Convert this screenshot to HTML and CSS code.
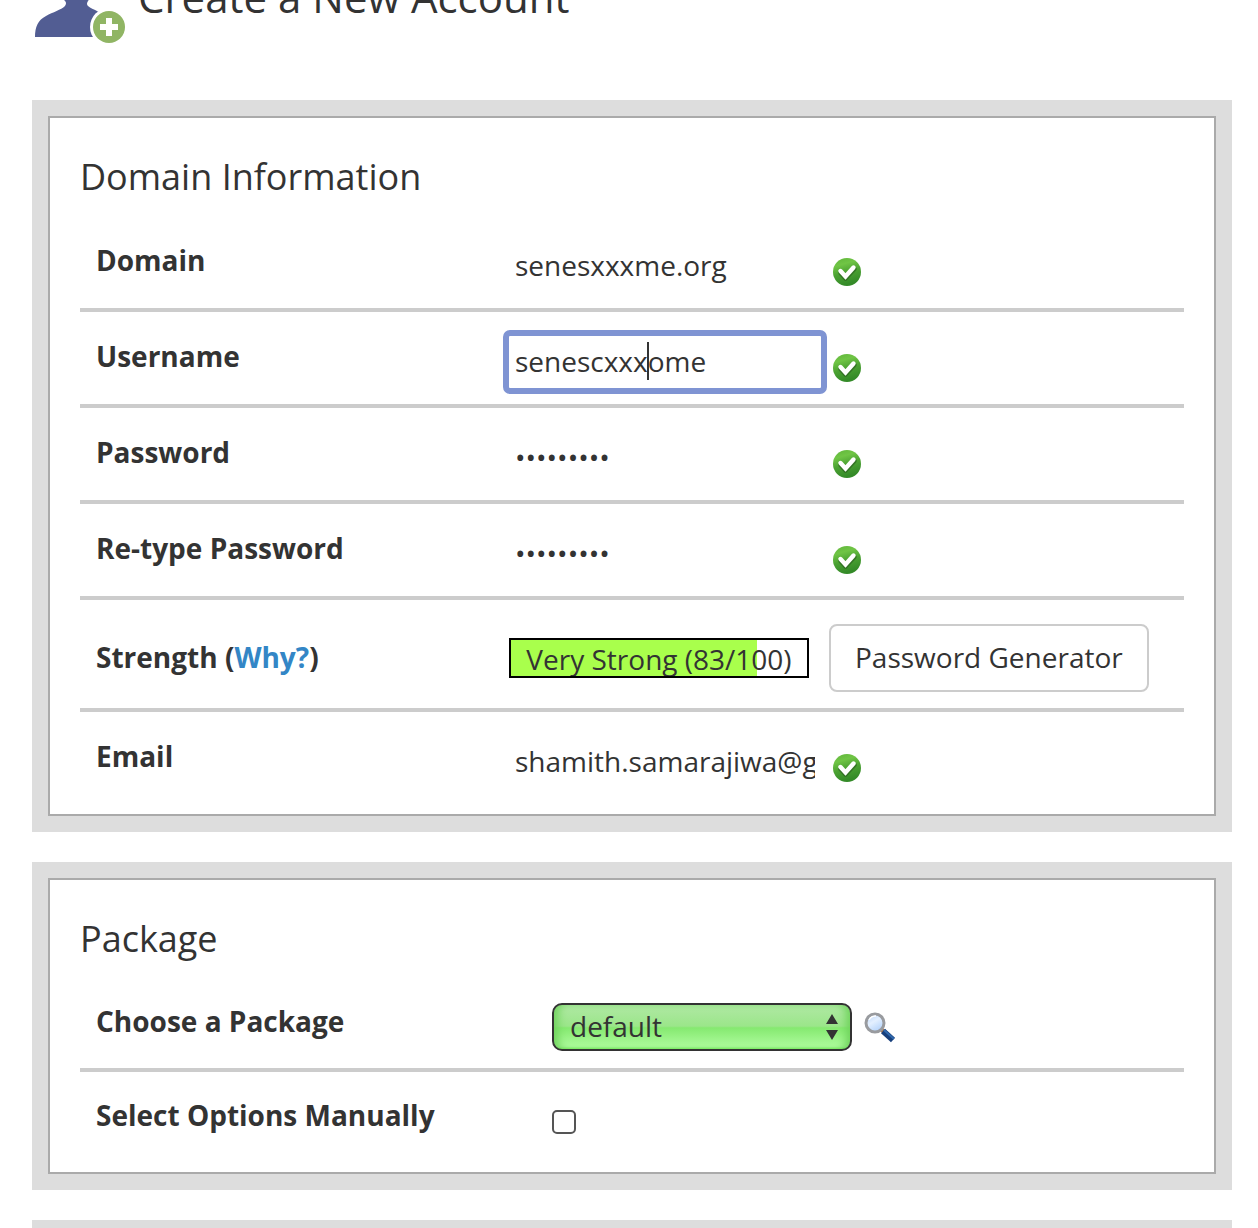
FILE: index.html
```html
<!DOCTYPE html>
<html lang="en">
<head>
<meta charset="utf-8">
<meta name="viewport" content="width=device-width, initial-scale=1">
<title>Create a New Account</title>
<link rel="stylesheet" href="styles.css">
</head>
<body>
<svg class="defs" aria-hidden="true">
  <defs>
    <linearGradient id="okFill" x1="0" y1="0" x2="0.3" y2="1">
      <stop offset="0" stop-color="#5fb53a"/>
      <stop offset="0.3" stop-color="#70c545"/>
      <stop offset="0.6" stop-color="#4ba232"/>
      <stop offset="1" stop-color="#348a28"/>
    </linearGradient>
    <linearGradient id="lensFill" x1="0" y1="0" x2="0.6" y2="1">
      <stop offset="0" stop-color="#b5d2f8"/>
      <stop offset="0.5" stop-color="#e4f0ff"/>
      <stop offset="1" stop-color="#b4d3fb"/>
    </linearGradient>
    <symbol id="ok" viewBox="0 0 28 28">
      <circle cx="14" cy="14" r="14" fill="url(#okFill)"/>
      <path d="M7.500 15l5 5.500L21.500 11" fill="none" stroke="#2b5f20" stroke-opacity="0.65" stroke-width="4.500" stroke-linecap="round" stroke-linejoin="round"/>
      <path d="M7.500 13l5 5.500L20.500 9.500" fill="none" stroke="#fff" stroke-width="4.400" stroke-linecap="round"/>
    </symbol>
  </defs>
</svg>
<header class="page-header">
  <svg class="user-icon" viewBox="0 0 92 84" aria-hidden="true">
    <path fill="#525d93" d="M31 41C24 33 21 24 22 15 23 5 32 0 42 0s19 5 20 15c1 9-2 18-8 26q-2 3 0 5c5 4 13 6 18 10 5 3 8 12 8 21H1C1 67 4 60 12 56 19 52 27 50 31 46q2-3 0-5z"/>
    <circle cx="75" cy="67" r="19" fill="#fff"/>
    <circle cx="75" cy="67" r="16" fill="#90b564"/>
    <path fill="#fff" d="M72 58h6v6h6v6h-6v6h-6v-6h-6v-6h6z"/>
  </svg>
  <h1>Create a New Account</h1>
</header>
<main class="panels">
  <form class="panel">
    <div class="panel-body">
      <h2>Domain Information</h2>
      <div class="row">
        <label for="domain">Domain</label>
        <div class="field">
          <input class="text" id="domain" type="text" value="senesxxxme.org">
          <svg class="ok" role="img" aria-label="Valid"><use href="#ok"/></svg>
        </div>
      </div>
      <div class="row">
        <label for="username">Username</label>
        <div class="field">
          <span class="editing"><input class="text active" id="username" type="text" value="senescxxxome"><span class="caret"></span></span>
          <svg class="ok" role="img" aria-label="Valid"><use href="#ok"/></svg>
        </div>
      </div>
      <div class="row">
        <label for="password">Password</label>
        <div class="field">
          <input class="text" id="password" type="password" value="xxxxxxxxx">
          <svg class="ok" role="img" aria-label="Valid"><use href="#ok"/></svg>
        </div>
      </div>
      <div class="row">
        <label for="password2">Re-type Password</label>
        <div class="field">
          <input class="text" id="password2" type="password" value="xxxxxxxxx">
          <svg class="ok" role="img" aria-label="Valid"><use href="#ok"/></svg>
        </div>
      </div>
      <div class="row strength-row">
        <div class="label">Strength (<a href="#why">Why?</a>)</div>
        <div class="field">
          <div class="meter"><div class="meter-fill" style="width: 83%"></div><span class="meter-text">Very Strong (83/100)</span></div>
          <button class="generator" type="button">Password Generator</button>
        </div>
      </div>
      <div class="row">
        <label for="email">Email</label>
        <div class="field">
          <input class="text" id="email" type="text" value="shamith.samarajiwa@gmail.com">
          <svg class="ok" role="img" aria-label="Valid"><use href="#ok"/></svg>
        </div>
      </div>
    </div>
  </form>
  <form class="panel package">
    <div class="panel-body">
      <h2>Package</h2>
      <div class="row">
        <label for="plan">Choose a Package</label>
        <div class="field">
          <div class="select-wrap">
            <select id="plan"><option>default</option></select>
            <svg class="arrows" viewBox="0 0 12 26" aria-hidden="true"><path fill="#333" d="M6 0l6 10H0zM0 16h12L6 26z"/></svg>
          </div>
          <svg class="search" viewBox="0 0 32 32" aria-hidden="true">
            <path d="M17 18l4 4" stroke="#b07a4c" stroke-width="4"/>
            <path d="M19 20l10 9" stroke="#173f7c" stroke-width="6"/>
            <path d="M20 19l10 9" stroke="#2f68ad" stroke-width="2"/>
            <circle cx="11" cy="12" r="9" fill="url(#lensFill)" stroke="#999b9f" stroke-width="3"/>
            <path d="M5 9a7 7 0 0 1 7-4" fill="none" stroke="#fff" stroke-width="1.500"/>
          </svg>
        </div>
      </div>
      <div class="row">
        <label for="manual">Select Options Manually</label>
        <div class="field"><input class="check" id="manual" type="checkbox"></div>
      </div>
    </div>
  </form>
  <section class="panel next"></section>
</main>
</body>
</html>
```
FILE: styles.css
```css
* { box-sizing: border-box; }

body {
  margin: 0;
  background: #fff;
  color: #333;
  font: 28px/36px "Open Sans", "Noto Sans", sans-serif;
}

.defs { position: absolute; width: 0; height: 0; }

.page-header {
  display: flex;
  align-items: flex-start;
  gap: 12px;
  height: 140px;
  margin-top: -40px;
  padding-left: 34px;
}

.user-icon { flex: none; width: 92px; height: 84px; }

h1 {
  margin: 8px 0 0;
  font-size: 42px;
  font-weight: 400;
  line-height: 58px;
}

.panels {
  display: flex;
  flex-direction: column;
  gap: 30px;
  padding: 0 26px 0 32px;
}

.panel { padding: 16px; background: #ddd; }

.panel-body {
  padding: 30px 30px 10px;
  border: 2px solid #aaa;
  background: #fff;
}

h2 {
  margin: 0 0 10px;
  font-size: 36px;
  font-weight: 400;
  line-height: 58px;
}

.row {
  display: grid;
  grid-template-columns: 413fr 659fr;
  padding: 24px 16px 16px;
  border-bottom: 4px solid #ccc;
}

.row:last-child { border-bottom: 0; }

label,
.label { font-weight: 700; }

.row > label { padding-top: 2px; }

.field { display: flex; align-items: flex-end; gap: 12px; }

.text {
  display: block;
  width: 312px;
  height: 52px;
  padding: 0 6px 2px;
  border: 0;
  background: #fff;
  color: inherit;
  font: inherit;
}

.active { outline: 6px solid #7f94d3; border-radius: 1px; }

.editing { position: relative; }

.caret {
  position: absolute;
  top: 6px;
  left: 138px;
  width: 2px;
  height: 38px;
  background: #333;
}

.ok { flex: none; width: 28px; height: 28px; margin-bottom: 6px; }

.strength-row,
.strength-row .field { align-items: center; }

.strength-row .label { padding-bottom: 2px; }

.strength-row .field { gap: 20px; }

a { color: #3386c6; text-decoration: none; }

.meter {
  position: relative;
  width: 300px;
  height: 40px;
  border: 2px solid #000;
  overflow: hidden;
}

.meter-fill { height: 100%; background: #a9ff4c; }

.meter-text {
  position: absolute;
  top: 1px;
  left: 0;
  width: 100%;
  text-align: center;
}

.generator {
  height: 68px;
  padding: 0 24px 2px;
  border: 2px solid #ccc;
  border-radius: 8px;
  background: #fff;
  color: inherit;
  font: inherit;
}

.package .row {
  grid-template-columns: 456fr 616fr;
  padding: 25px 16px 17px;
}

.package .row > label { padding-top: 0; }

.package .field { align-items: center; min-height: 48px; }

.select-wrap { position: relative; }

select {
  display: block;
  appearance: none;
  width: 300px;
  height: 48px;
  padding: 0 16px 2px;
  border: 2px solid #333;
  border-radius: 10px;
  background: linear-gradient(#b0e8a4, #9be68a 48%, #85e970 52%, #adfb9c 94%, #80f467);
  box-shadow: inset 8px 0 8px -4px #6fd35c, inset -8px 0 8px -4px #6fd35c;
  color: inherit;
  font: inherit;
}

.arrows {
  position: absolute;
  top: 11px;
  right: 14px;
  width: 12px;
  height: 26px;
  pointer-events: none;
}

.search { flex: none; width: 32px; height: 32px; }

.check {
  appearance: none;
  width: 24px;
  height: 24px;
  margin: 2px 0 0;
  border: 2px solid #555;
  border-radius: 5px;
  background: #fff;
}

.next { padding: 4px; }
```
